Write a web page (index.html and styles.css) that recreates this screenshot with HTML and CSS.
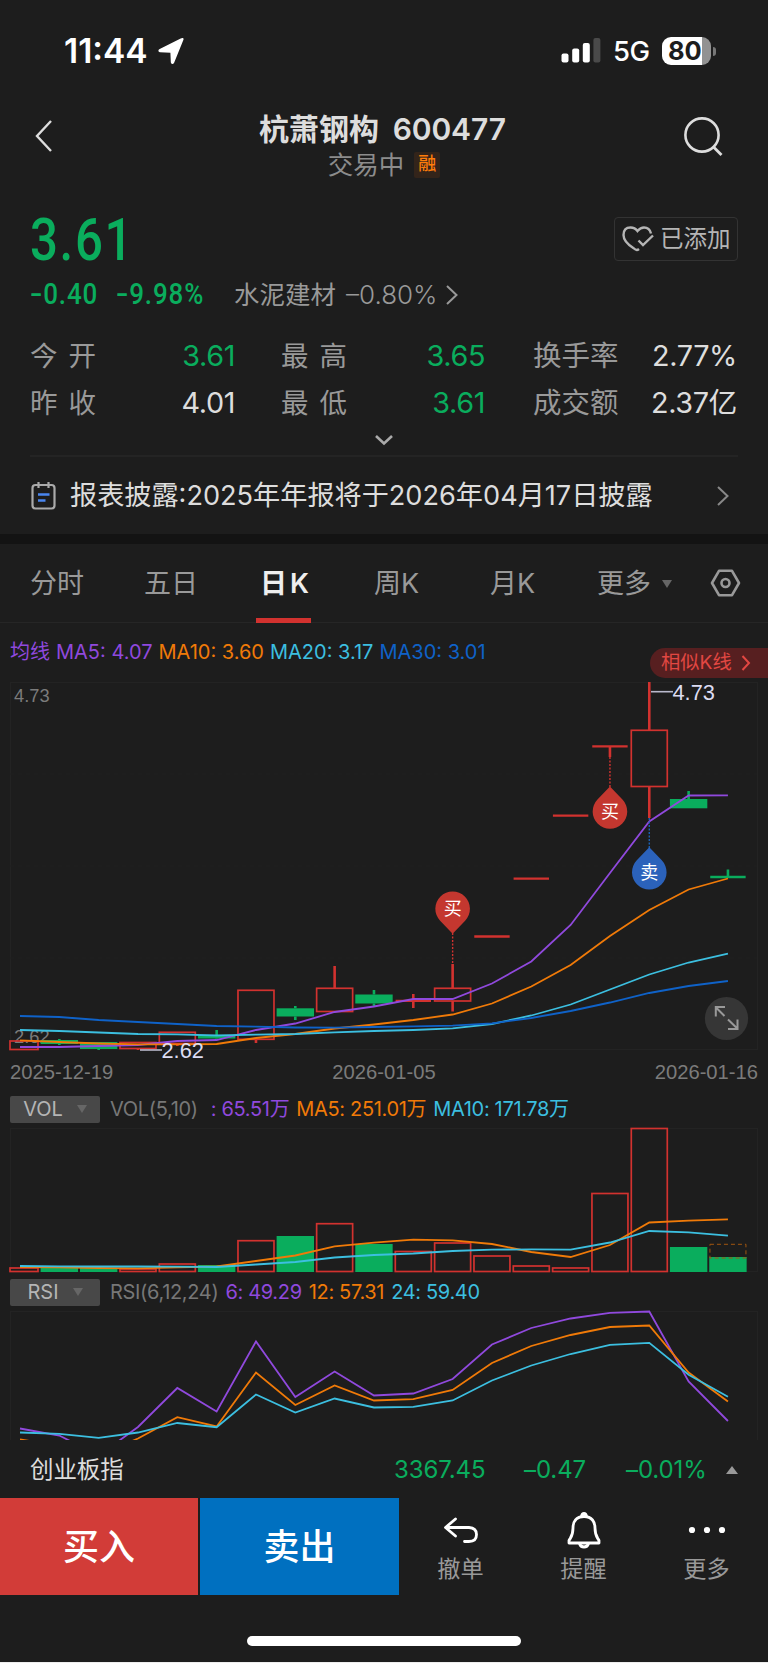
FILE: index.html
```html
<!DOCTYPE html>
<html lang="zh-CN">
  <head>
    <meta charset="utf-8" />
    <title>杭萧钢构 600477</title>
    <link rel="stylesheet" href="styles.css">
  </head>

  <body>
    <div class="status-bar">
      <span class="time">11:44</span>
      <svg class="location" width="27" height="27" viewBox="0 0 27 27">
        <path d="M24.6 1.6 15.4 24.4Q14.4 26.3 13.6 24.2L13.2 14.6Q13.1 14 12.5 14L2.2 13.5Q.2 12.8 2.1 11.6L23 1.2Q25.3.2 24.6 1.6Z" fill="#fff" stroke="#fff" stroke-width="1.6" />
      </svg>
      <svg class="signal" width="40" height="26" viewBox="0 0 40 26" fill="#fff">
        <rect x="0.5" y="15.5" width="7" height="9" rx="2" />
        <rect x="11.2" y="10.5" width="7" height="14" rx="2" />
        <rect x="21.8" y="5" width="7" height="19.5" rx="2" />
        <rect x="32.4" y="0" width="7" height="24.5" rx="2" fill="#4a4a4a" />
      </svg>
      <span class="network">5G</span>
      <div class="battery"><span>80</span></div>
      <i class="battery-cap"></i>
    </div>

    <header class="header">
      <svg class="back" width="20" height="36" viewBox="0 0 20 36">
        <path d="M17 3 3 18 17 33" fill="none" stroke="#ddd" stroke-width="2.4" />
      </svg>
      <div class="title">
        <h1>杭萧钢构 <span>600477</span></h1>
        <p>交易中 <i class="badge">融</i></p>
      </div>
      <svg class="search" width="42" height="42" viewBox="0 0 42 42">
        <circle cx="19" cy="18" r="16.6" fill="none" stroke="#ddd" stroke-width="2.6" />
        <path d="M30.5 30 38.5 38" stroke="#ddd" stroke-width="2.8" />
      </svg>
    </header>

    <section class="quote">
      <div class="price-row">
        <strong class="price">3.61</strong>
        <button class="added">
          <svg width="33" height="28" viewBox="0 0 33 28" fill="none" stroke="#b5b5b5" stroke-width="2.4">
            <path d="M17 24Q14.5 26 12 23.5 1.5 17 1.5 10 1.5 2.5 8.5 2.5 13 2.5 15.500 6 18.500 2.500 22 2.500 27.500 2.500 29 8.500" />
            <path d="M16.500 15.500 21 20 31 10.500" />
          </svg>
          已添加
        </button>
      </div>
      <div class="change-row">
        <span class="change"><b>-</b>0.40</span>
        <span class="change percent"><b>-</b>9.98%</span>
        <span class="sector">水泥建材</span>
        <span class="sector-change">–0.80%</span>
        <svg width="14" height="22" viewBox="0 0 14 22"><path d="M2 2 11.500 11 2 20" fill="none" stroke="#999" stroke-width="2" /></svg>
      </div>
      <dl class="stats">
        <dt>今<s></s>开</dt><dd class="down">3.61</dd>
        <dt>最<s></s>高</dt><dd class="down">3.65</dd>
        <dt class="tight">换手率</dt><dd>2.77%</dd>
        <dt>昨<s></s>收</dt><dd>4.01</dd>
        <dt>最<s></s>低</dt><dd class="down">3.61</dd>
        <dt class="tight">成交额</dt><dd>2.37亿</dd>
      </dl>
      <div class="expand">
        <svg width="20" height="12" viewBox="0 0 20 12"><path d="M2 2 10 9.500 18 2" fill="none" stroke="#aaa" stroke-width="2.600" /></svg>
      </div>
    </section>

    <div class="notice">
      <svg width="25" height="29" viewBox="0 0 25 29" fill="none" stroke-width="2.2">
        <rect x="1.500" y="4" width="22" height="23.500" rx="3" stroke="#aaa" />
        <path d="M7.500 1V7M17.500 1V7" stroke="#aaa" />
        <path d="M7 13.500H18.500M7 19.500H14.500" stroke="#4a86f0" stroke-width="2.600" />
      </svg>
      <span>报表披露:2025年年报将于2026年04月17日披露</span>
      <svg width="14" height="22" viewBox="0 0 14 22"><path d="M2 2 11.500 11 2 20" fill="none" stroke="#888" stroke-width="2" /></svg>
    </div>

    <nav class="tabs">
      <a>分时</a>
      <a>五日</a>
      <a class="active">日<s></s>K</a>
      <a>周K</a>
      <a>月K</a>
      <a class="more">更多<i class="caret"></i></a>
      <svg width="31" height="28" viewBox="0 0 31 28" fill="none" stroke="#999" stroke-width="2.600">
        <path d="M9 1.800H22L29 14 22 26.200H9L2 14Z" stroke-linejoin="round" />
        <circle cx="15.500" cy="14" r="4" />
      </svg>
    </nav>

    <div class="legend ma">
      <span class="purple">均线</span>
      <span class="purple">MA5: 4.07</span>
      <span class="orange">MA10: 3.60</span>
      <span class="cyan">MA20: 3.17</span>
      <span class="blue">MA30: 3.01</span>
      <button class="similar">相似K线
        <svg width="10" height="16" viewBox="0 0 10 16"><path d="M1.500 1 8 8 1.500 15" fill="none" stroke="#e24742" stroke-width="2" /></svg>
      </button>
    </div>
    <svg class="kline" width="768" height="382" viewBox="0 680 768 382"></svg>
    <div class="dates"><span>2025-12-19</span><span>2026-01-05</span><span>2026-01-16</span></div>

    <div class="legend vol">
      <button class="picker">VOL<i class="caret"></i></button>
      <span class="gray">VOL(5,10)</span>
      <span class="purple">: 65.51万</span>
      <span class="orange">MA5: 251.01万</span>
      <span class="cyan">MA10: 171.78万</span>
    </div>
    <svg class="volume" width="768" height="148" viewBox="0 1126 768 148"></svg>

    <div class="legend rsi">
      <button class="picker">RSI<i class="caret"></i></button>
      <span class="gray">RSI(6,12,24)</span>
      <span class="purple">6: 49.29</span>
      <span class="orange">12: 57.31</span>
      <span class="cyan">24: 59.40</span>
    </div>
    <svg class="rsi-chart" width="768" height="130" viewBox="0 1309.500 768 130"></svg>

    <div class="index-row">
      <span class="name">创业板指</span>
      <span class="point">3367.45</span>
      <span class="diff">–0.47</span>
      <span class="rate">–0.01%</span>
      <i></i>
    </div>

    <footer class="actions">
      <button class="buy">买入</button>
      <button class="sell">卖出</button>
      <a>
        <svg width="40" height="38" viewBox="0 0 40 38" fill="none" stroke="#fff" stroke-width="2.800" stroke-linecap="round" stroke-linejoin="round">
          <path d="M14.500 8 4.500 16.500 14.500 25M5 16.500H28Q35.500 17 35.500 23.500 35.500 30.500 28 30.500H23.500" />
        </svg>
        撤单
      </a>
      <a>
        <svg width="40" height="38" viewBox="0 0 40 38" fill="none" stroke="#fff" stroke-width="2.800" stroke-linejoin="round">
          <path d="M20 5.500C12 5.500 9 11 9 17 9 25 7 26 5 29.500V32H35V29.500C33 26 31 25 31 17 31 11 28 5.500 20 5.500Z" />
          <path d="M17.500 5.500Q18 2.500 20 2.500 22 2.500 22.500 5.500M15.500 32.500Q16.500 36 20 36 23.500 36 24.500 32.500" />
        </svg>
        提醒
      </a>
      <a>
        <svg width="40" height="38" viewBox="0 0 40 38" fill="#fff">
          <circle cx="5" cy="19" r="3.100" /><circle cx="20" cy="19" r="3.100" /><circle cx="35" cy="19" r="3.100" />
        </svg>
        更多
      </a>
    </footer>
    <div class="home-bar"><i></i></div>

    <script>
      const RED = "#d2322f";
      const GREEN = "#0aad5d";
      const COLORS = ["#9049dd", "#f07a08", "#3cbfe0", "#0f62c8"];
      const STEP = 39.33;
      const HALF = 18;
      const cx = (i) => 20 + i * STEP;

      // [type, top, bottom, wickTop, wickBottom], f = flat bar
      const candles = [
        ["r", 1041, 1049.5, 1041, 1049.5],
        ["g", 1040, 1044, 1039, 1045],
        ["g", 1042, 1049, 1042, 1050],
        ["r", 1042.5, 1048.5, 1042, 1050],
        ["r", 1032.3, 1043.5, 1032, 1046],
        ["g", 1035, 1038.5, 1030, 1039],
        ["r", 990.3, 1039.3, 990, 1043],
        ["g", 1008.3, 1016.5, 1006, 1020],
        ["r", 988.3, 1011.5, 966, 1011],
        ["g", 994.5, 1003.5, 990, 1006],
        ["fr", 1000.8, 1000.8, 994, 1008],
        ["r", 988.3, 1001, 964, 1011.5],
        ["fr", 936.5],
        ["fr", 878.7],
        ["fr", 815.7],
        ["fr", 746.3, 746.3, 746, 757],
        ["r", 730.3, 786.5, 682, 818],
        ["g", 799, 808.3, 791, 808],
        ["fg", 877, 877, 869.5, 877],
      ];
      const ma = [
        [1047, 1047, 1046, 1045, 1041, 1040, 1030, 1023.5, 1012, 1006.5, 999, 999, 983.5, 961.5, 925, 873, 821.5, 795.5, 795.3],
        [1040.3, 1042, 1043.5, 1044.3, 1044.3, 1044, 1038, 1034, 1028.5, 1024.5, 1020, 1014.5, 1003.5, 986.5, 965, 936, 910, 889.5, 878.5],
        [1030, 1031, 1032.5, 1034, 1034.3, 1035.5, 1034.6, 1034, 1032.3, 1031, 1030, 1028.3, 1024, 1015.5, 1004.5, 989.5, 974.5, 962.5, 953.7],
        [1016, 1017, 1020, 1022, 1024, 1026, 1026.7, 1027.5, 1027.7, 1027, 1026.3, 1025.7, 1023.3, 1018, 1011, 1002.5, 993, 986, 981],
      ];
      const volumes = [1268, 1268, 1268, 1269, 1264, 1265, 1240.7, 1236, 1223.7, 1244, 1251.5, 1243, 1256, 1266, 1268, 1193.5, 1128.5, 1247, 1257];
      const volumeUp = "1001101010111111100";
      const volumeMa = [
        [],
        [1267, 1267.3, 1268, 1268.3, 1267.3, 1266.5, 1261, 1255.5, 1246.3, 1242.7, 1239.7, 1240.3, 1244, 1252, 1257, 1245, 1222.5, 1220.7, 1219.3],
        [1266, 1266.3, 1266.5, 1266.5, 1266.7, 1267, 1264.5, 1262, 1257.5, 1255, 1253.5, 1251, 1249.7, 1249.3, 1249.7, 1242.5, 1231, 1232.3, 1235.7],
      ];
      const rsi = [
        [1428, 1435, 1455, 1426.5, 1387.5, 1411, 1341, 1396.5, 1371, 1395, 1393, 1378.5, 1344, 1327.5, 1318, 1312.3, 1311, 1381, 1420.5],
        [1439, 1445, 1455, 1438, 1416.7, 1426, 1372, 1404.5, 1385, 1400, 1398.7, 1389.5, 1362.5, 1345.5, 1334.5, 1326.5, 1325, 1372, 1401],
        [1432, 1433.3, 1437.3, 1432, 1422.5, 1426.7, 1394, 1412, 1398, 1407, 1406.3, 1400, 1380, 1365, 1353.5, 1344.3, 1342.3, 1374.3, 1396.3],
      ];

      function line(x1, y1, x2, y2, color, width, dash) {
        return `<line x1="${x1}" y1="${y1}" x2="${x2}" y2="${y2}" stroke="${color}" stroke-width="${width}" ${dash ? `stroke-dasharray="${dash}"` : ""}/>`;
      }

      function box(i, top, bottom, up) {
        const x = Math.max(cx(i) - HALF, 10);
        const w = cx(i) + HALF - x;
        return up
          ? `<rect x="${x}" y="${top}" width="${w}" height="${bottom - top}" fill="none" stroke="${RED}" stroke-width="1.7"/>`
          : `<rect x="${x - 0.7}" y="${top}" width="${w + 1.4}" height="${bottom - top}" fill="${GREEN}"/>`;
      }

      function curves(list) {
        return list
          .map((ys, n) => `<polyline points="${ys.map((y, i) => `${cx(i)},${y}`).join(" ")}" fill="none" stroke="${COLORS[n]}" stroke-width="1.8"/>`)
          .join("");
      }

      function frame(top, bottom) {
        return `<rect x="10.5" y="${top}" width="747" height="${bottom - top}" fill="none" stroke="#232323"/>`;
      }

      function pin(x, y, up, color, text) {
        const tip = up ? -25 : 25;
        const k = up ? -1 : 1;
        return `<path d="M${x} ${y + tip}L${x - 12.5} ${y + 12 * k}A17.3 17.3 0 1 ${up ? 0 : 1} ${x + 12.5} ${y + 12 * k}Z" fill="${color}"/>
          <text class="pin" x="${x}" y="${y + 6.5}">${text}</text>`;
      }

      function drawKline() {
        let html = frame(682.5, 1049.5);
        [774, 866, 958].forEach((y) => (html += line(10, y, 757, y, "#212121", 1, "4 4")));
        html += `<text class="axis" x="14" y="702">4.73</text><text class="axis" x="14" y="1042.5">2.62</text>`;
        candles.forEach(([type, top, bottom, wickTop, wickBottom], i) => {
          const color = type.includes("r") ? RED : GREEN;
          if (type[0] === "f") {
            html += line(cx(i) - 17.7, top, cx(i) + 17.7, top, color, 2.3);
          } else {
            html += box(i, top, bottom, type === "r");
          }
          if (wickTop < top) html += line(cx(i), wickTop, cx(i), top, color, 2.6);
          if (wickBottom > bottom) html += line(cx(i), bottom, cx(i), wickBottom, color, 2.6);
        });
        html += curves(ma);
        html += line(cx(11), 933, cx(11), 964, RED, 1.4, "2 1.5");
        html += line(cx(15), 757, cx(15), 787, RED, 1.4, "2 1.5");
        html += line(cx(16), 818, cx(16), 848, "#1c62b5", 1.4, "2 1.5");
        html += pin(cx(11), 908.7, false, "#c4372f", "买");
        html += pin(cx(15), 811.5, true, "#c4372f", "买");
        html += pin(cx(16), 872.3, true, "#2b62bb", "卖");
        html += line(651, 691.7, 673, 691.7, "#b9b9cc", 1.6);
        html += line(140, 1050, 162, 1050, "#b9b9cc", 1.6);
        html += `<text class="peak" x="672.5" y="699.5">4.73</text><text class="peak" x="161.5" y="1058">2.62</text>`;
        html += `<circle cx="726.5" cy="1018.5" r="21.6" fill="#363636"/>
          <path d="M715.8 1016.5V1007H725M716 1007.5 724.5 1016M737.5 1019.5V1029H728M737.3 1028.5 728 1019.5" fill="none" stroke="#999" stroke-width="2"/>`;
        document.querySelector(".kline").innerHTML = html;
      }

      function drawVolume() {
        let html = frame(1128.5, 1271.5);
        volumes.forEach((top, i) => {
          const up = volumeUp[i] === "1";
          html += box(i, top, up ? 1271.5 : 1272, up);
        });
        html += `<rect x="${cx(18) - HALF}" y="1244.3" width="36" height="13.7" fill="none" stroke="#a0560f" stroke-dasharray="4 3"/>`;
        html += curves(volumeMa);
        document.querySelector(".volume").innerHTML = html;
      }

      drawKline();
      drawVolume();
      document.querySelector(".rsi-chart").innerHTML = frame(1311, 1460) + curves(rsi);
    </script>
  </body>
</html>
```

FILE: styles.css
```css
* {
  box-sizing: border-box;
}

body {
  margin: 0;
  width: 768px;
  height: 1663px;
  overflow: hidden;
  background-color: #1d1d1d;
  border-bottom: 1px solid #eee;
  color: #ddd;
  font-family: Inter, "Noto Sans CJK SC", sans-serif;
  font-size: 26px;
  line-height: 1;
}

button {
  border: 0;
  padding: 0;
  color: inherit;
  font: inherit;
}

svg {
  display: block;
  flex: none;
}

i,
s {
  font-style: normal;
  text-decoration: none;
}

span {
  white-space: nowrap;
}

/* status bar */
.status-bar {
  display: flex;
  align-items: center;
  height: 102px;
  padding-left: 64px;
  color: #fff;
}

.time {
  width: 94px;
  padding-top: 2px;
  font-size: 33.5px;
  font-weight: 600;
}

.signal {
  margin-left: 376px;
}

.network {
  width: 49px;
  margin-left: 12px;
  padding-top: 2px;
  font-size: 27.5px;
  font-weight: 500;
  letter-spacing: -0.5px;
}

.battery {
  width: 49px;
  height: 28px;
  padding-left: 6px;
  border-radius: 9px;
  background: linear-gradient(90deg, #fff 40px, #929292 40px);
  color: #1d1d1d;
  font-size: 25.5px;
  font-weight: 700;
  line-height: 28px;
}

.battery-cap {
  width: 3px;
  height: 9px;
  margin-left: 2px;
  border-radius: 0 4px 4px 0;
  background-color: #777;
}

/* header */
.header {
  display: flex;
  align-items: flex-start;
  height: 98px;
  padding: 11px 43px 0 34px;
}

.back {
  margin-top: 5px;
}

.title {
  flex: 1;
  text-align: center;
  padding-left: 22px;
}

.title h1 {
  margin: 0;
  padding-left: 6px;
  font-size: 30px;
  font-weight: 600;
  line-height: 32px;
}

.title h1 span {
  margin-left: 6px;
  font-weight: 600;
  letter-spacing: -0.1px;
}

.title p {
  display: flex;
  justify-content: center;
  align-items: center;
  gap: 10px;
  margin: 6px 0 0;
  padding-left: 9px;
  color: #8c8c8c;
  font-size: 25.5px;
  line-height: 28px;
}

.badge {
  width: 26px;
  height: 26px;
  border-radius: 2px;
  background-color: #33241a;
  color: #ff7d0a;
  font-size: 18px;
  font-weight: 500;
  line-height: 24px;
}

.search {
  margin-top: 4px;
}

/* quote */
.quote {
  height: 257px;
  margin: 0 30px;
  border-bottom: 2px solid #242424;
}

.price-row {
  display: flex;
  justify-content: space-between;
  height: 77px;
}

.price {
  margin-top: 10px;
  color: #0aad5d;
  font-family: Roboto, sans-serif;
  font-size: 60px;
  font-weight: 500;
  letter-spacing: 2px;
  transform: scaleX(0.82);
  transform-origin: left;
}

.added {
  display: flex;
  align-items: center;
  gap: 5px;
  width: 124px;
  height: 44px;
  margin-top: 17px;
  padding-left: 7px;
  border: 1px solid #333;
  border-radius: 4px;
  background: none;
  color: #b5b5b5;
  font-size: 23.5px;
  white-space: nowrap;
}

.change-row {
  display: flex;
  align-items: center;
  height: 36px;
  color: #999;
  font-size: 25.500px;
}

.change {
  width: 86px;
  color: #0aad5d;
  font-family: Roboto, sans-serif;
  font-size: 29.5px;
  font-weight: 500;
  letter-spacing: 1px;
  transform: scaleX(0.88);
  transform-origin: left;
}

.change b {
  display: inline-block;
  width: 14px;
  margin-right: 1px;
  font-weight: 500;
  transform: scaleX(1.4);
  transform-origin: left;
}

.percent {
  width: 118px;
}

.sector {
  width: 112px;
}

.sector-change {
  width: 99px;
  font-size: 26px;
  font-weight: 300;
}

.stats {
  display: grid;
  grid-template-columns: 78px 127px 118px 132px 134px 118px;
  grid-auto-rows: 47px;
  align-items: center;
  margin: 20px 0 0;
}

.stats dt {
  display: flex;
  color: #999;
  font-size: 27.5px;
  white-space: nowrap;
}

.stats dt s {
  width: 11px;
}

.stats .tight {
  font-size: 28.5px;
}

.stats dt:nth-of-type(3n + 2) {
  padding-left: 46px;
}

.stats dt:nth-of-type(3n) {
  padding-left: 48px;
}

.stats dd {
  margin: 0;
  text-align: right;
  white-space: nowrap;
  font-size: 28.8px;
  letter-spacing: -0.4px;
}

.stats .down {
  color: #0aad5d;
}

.expand {
  display: flex;
  justify-content: center;
  padding-top: 7px;
}

/* notice */
.notice {
  display: flex;
  align-items: center;
  height: 87px;
  padding: 0 38px 0 31px;
  border-bottom: 10px solid #131313;
}

.notice span {
  flex: 1;
  margin-left: 14px;
  font-size: 27.15px;
}

/* tabs */
.tabs {
  display: flex;
  align-items: center;
  height: 79px;
  padding-left: 30px;
  border-bottom: 1px solid #262626;
  color: #999;
  font-size: 27px;
}

.tabs a {
  width: 114px;
  line-height: 79px;
}

.tabs .active {
  position: relative;
  width: 116px;
  padding-left: 2px;
  color: #eee;
  font-weight: 600;
}

.tabs .active s {
  margin-left: 3px;
}

.tabs .active::after {
  content: "";
  position: absolute;
  left: -2px;
  bottom: 0;
  width: 55px;
  height: 5px;
  background-color: #d2322f;
}

.tabs a:nth-child(5) {
  width: 109px;
  padding-left: 2px;
}

.tabs .more {
  width: 113px;
}

.caret {
  display: inline-block;
  border: 5px solid transparent;
  border-top: 8px solid #666;
  border-bottom: 0;
}

.tabs .caret {
  margin-left: 11px;
  vertical-align: 5px;
}

/* indicator legends */
.legend {
  display: flex;
  align-items: center;
  font-size: 20px;
}

.ma {
  gap: 6px;
  height: 57px;
  padding-left: 10px;
}

.similar {
  display: flex;
  align-items: center;
  gap: 9px;
  align-self: flex-end;
  width: 118px;
  height: 30px;
  margin-left: auto;
  margin-bottom: 2px;
  padding-left: 11px;
  border-radius: 15px 0 0 15px;
  background-color: #571f20;
  color: #e24742;
  font-size: 19.3px;
  white-space: nowrap;
}

.purple {
  color: #9049dd;
}

.orange {
  color: #f07a08;
}

.cyan {
  color: #3cbfe0;
}

.blue {
  color: #0f62c8;
}

.gray {
  color: #777;
}

.dates {
  display: flex;
  justify-content: space-between;
  height: 32px;
  padding: 0 10px;
  color: #7b7b7b;
  font-family: "Liberation Sans", sans-serif;
  font-size: 20.2px;
  line-height: 20px;
}

.vol,
.rsi {
  margin-left: 10px;
  letter-spacing: -0.33px;
}

.vol {
  height: 32px;
  padding-bottom: 2px;
}

.rsi {
  height: 36px;
}

.picker {
  display: flex;
  align-items: center;
  justify-content: center;
  gap: 14px;
  width: 90px;
  height: 27px;
  margin-right: 10px;
  border-radius: 2px;
  background-color: #484848;
  color: #b5b5b5;
  font-size: 20px;
}

.vol span,
.rsi span {
  margin-right: 7px;
}

.vol .gray {
  margin-right: 13px;
}

/* svg text */
.axis {
  fill: #7b7b7b;
  font-family: "Liberation Sans", sans-serif;
  font-size: 18.3px;
}

.peak {
  fill: #dcdcf2;
  font-family: "Liberation Sans", sans-serif;
  font-size: 21.8px;
}

.pin {
  fill: #fff;
  font-size: 18px;
  text-anchor: middle;
}

/* index row */
.index-row {
  display: flex;
  align-items: center;
  height: 58px;
  padding-top: 2px;
  padding-left: 30px;
  color: #0aad5d;
  font-size: 24px;
  letter-spacing: -0.1px;
}

.name {
  width: 364px;
  color: #ddd;
  font-size: 23.5px;
}

.point {
  width: 130px;
}

.diff {
  width: 102px;
}

.rate {
  width: 100px;
}

.index-row i {
  border: 6px solid transparent;
  border-top: 0;
  border-bottom: 8px solid #999;
}

/* bottom actions */
.actions {
  display: flex;
  height: 98px;
}

.actions button {
  width: 198px;
  height: 97px;
  color: #fff;
  font-size: 36px;
  font-weight: 500;
}

.buy {
  background-color: #d23c38;
}

.actions .sell {
  width: 199px;
  margin-left: 2px;
  background-color: #0070c0;
}

.actions a {
  display: flex;
  flex: 1;
  flex-direction: column;
  align-items: center;
  padding-top: 13px;
  color: #999;
  font-size: 23.2px;
  line-height: 40px;
}

.home-bar {
  padding-top: 40px;
}

.home-bar i {
  display: block;
  width: 274px;
  height: 10px;
  margin: 0 auto;
  border-radius: 5px;
  background-color: #fff;
}
```
